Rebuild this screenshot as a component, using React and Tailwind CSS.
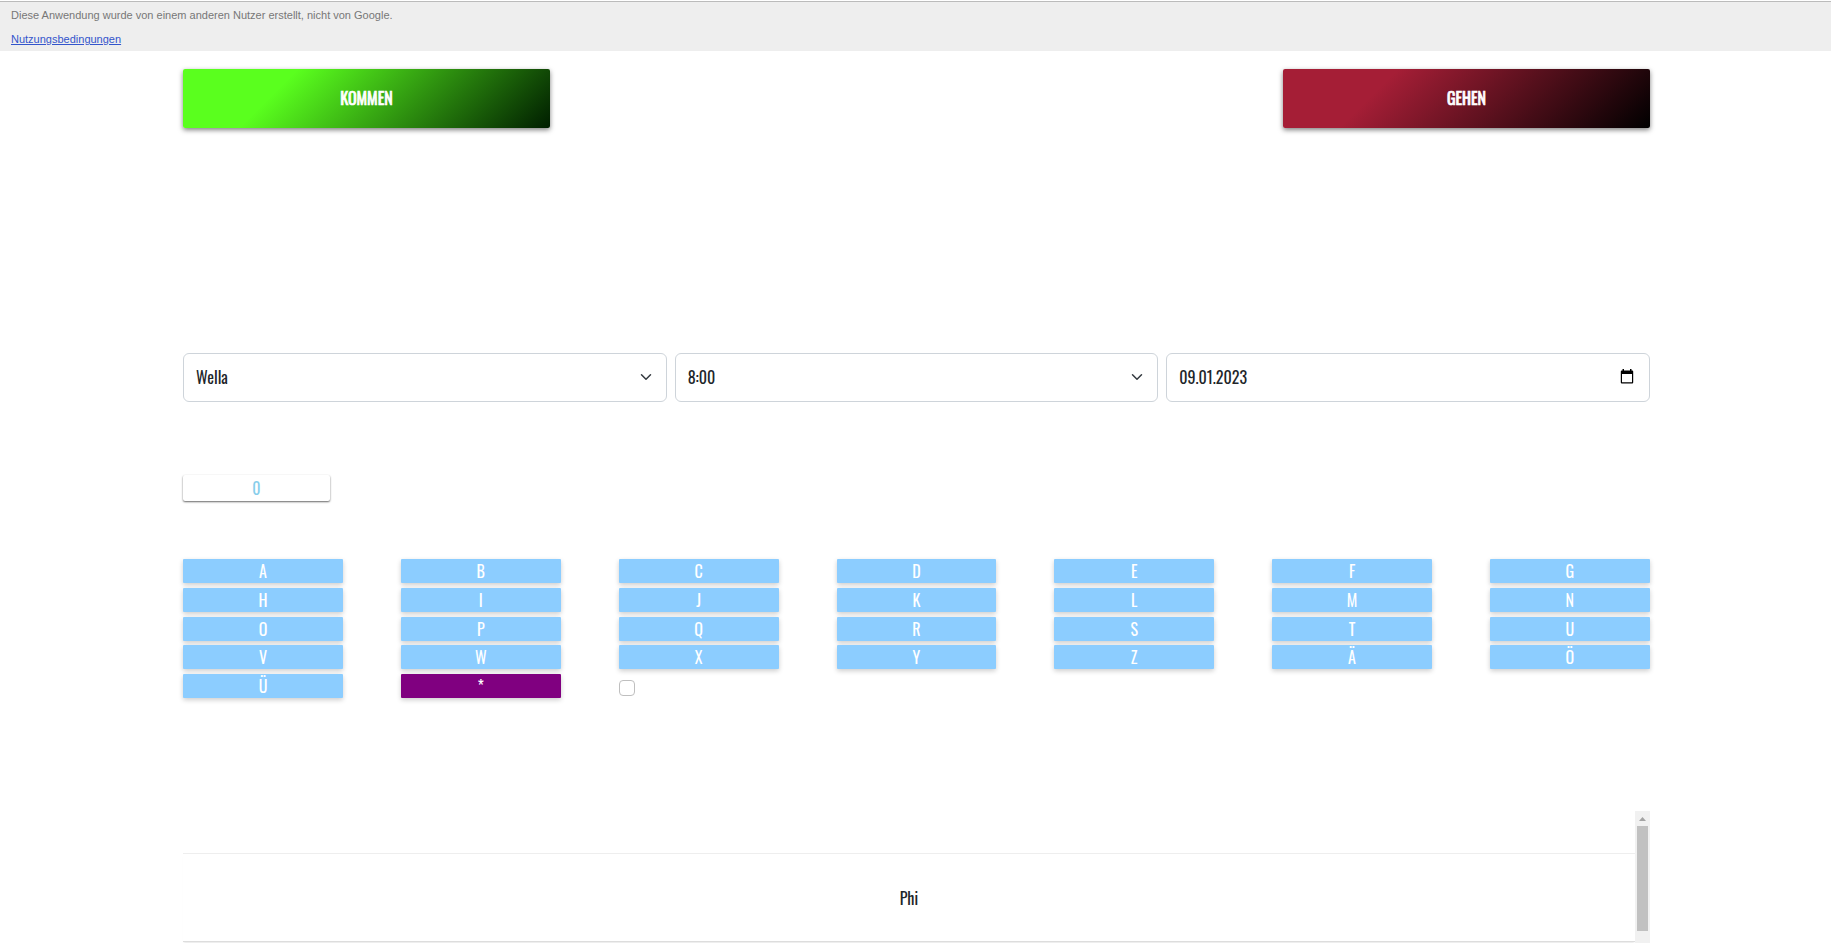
const keys = [..."ABCDEFGHIJKLMNOPQRSTUVWXYZÄÖÜ"];

function Chevron() {
  return (
    <svg className="pointer-events-none absolute right-[13px] top-[18px] h-3 w-4" viewBox="0 0 16 16" fill="none" stroke="#343a40" strokeWidth="2" strokeLinecap="round" strokeLinejoin="round" aria-hidden="true">
      <path d="m2 5 6 6 6-6" />
    </svg>
  );
}

function Choice({ label, value }) {
  return (
    <div className="relative">
      <select aria-label={label} className="block h-[49px] w-full appearance-none rounded-md border border-[#ced4da] bg-white px-3 pb-0.5 text-[#212529]">
        <option>{value}</option>
      </select>
      <Chevron />
    </div>
  );
}

export default function App() {
  return (
    <div className="flex min-h-screen flex-col bg-white font-['Oswald','Liberation_Sans_Narrow','Roboto',sans-serif] text-base text-[#212529]">
      <header className="mt-px flex h-[50px] flex-col gap-3 border-t border-[#bbbbbb] bg-[#eeeeee] px-[11px] pt-[7px] font-['Liberation_Sans',Arial,sans-serif] text-[11px] leading-3">
        <p className="text-[#777777]">Diese Anwendung wurde von einem anderen Nutzer erstellt, nicht von Google.</p>
        <p><a href="#terms" className="text-[#3355cc] underline">Nutzungsbedingungen</a></p>
      </header>
      <main className="ml-[10%] flex w-[80.1%] grow flex-col">
        <div className="mt-[18px] flex justify-between">
          <button className="h-[59px] w-1/4 rounded-xs bg-[linear-gradient(135deg,#5aff1e_27%,#001e00_100%)] pb-0.5 text-white shadow-[0_2px_5px_rgba(0,0,0,0.5)] [-webkit-text-stroke:0.7px_white]">KOMMEN</button>
          <button className="h-[59px] w-1/4 rounded-xs bg-[linear-gradient(135deg,#a51e36_27%,#000000_100%)] pb-0.5 text-white shadow-[0_2px_5px_rgba(0,0,0,0.5)] [-webkit-text-stroke:0.7px_white]">GEHEN</button>
        </div>
        <div className="mt-[225px] grid grid-cols-3 gap-2">
          <Choice label="Kunde" value="Wella" />
          <Choice label="Uhrzeit" value="8:00" />
          <div className="relative">
            <input aria-label="Datum" defaultValue="09.01.2023" className="block h-[49px] w-full rounded-md border border-[#ced4da] bg-white px-3 pb-0.5 text-[#212529]" />
            <svg className="pointer-events-none absolute right-4 top-4 h-[15px] w-[14px]" viewBox="0 0 14 15" aria-hidden="true">
              <path fillRule="evenodd" d="M2.5 0H4v1.5h6V0h1.5v1.5h.7a1 1 0 0 1 1 1v11a1 1 0 0 1-1 1H1.8a1 1 0 0 1-1-1v-11a1 1 0 0 1 1-1h.7zM2 5v8.2h10V5z" />
            </svg>
          </div>
        </div>
        <button className="mt-[73px] h-[26px] w-1/10 rounded-xs bg-white text-[#87ceeb] shadow-[0_1px_2px_rgba(0,0,0,0.6)]">0</button>
        <div className="mt-[58px] grid h-[139px] grid-cols-7 content-between gap-x-[58px]">
          {keys.map((k) => (
            <button key={k} className="h-6 rounded-[1px] bg-[#8ccdff] leading-6 text-white shadow-[0_2px_5px_rgba(0,0,0,0.2)]">{k}</button>
          ))}
          <button className="h-6 rounded-[1px] bg-[#800080] leading-6 text-white shadow-[0_2px_5px_rgba(0,0,0,0.2)]">*</button>
          <input type="checkbox" aria-label="Auswahl" className="mt-[6px] h-4 w-4 appearance-none rounded border border-[#bfbfbf] bg-white" />
        </div>
        <section className="mt-[113px] flex grow">
          <div className="flex grow flex-col">
            <div className="h-[43px] border-b border-[#eeeeee]" />
            <div className="flex h-[88px] items-center justify-center border-b border-[#dddddd] shadow-[0_2px_2px_-1px_rgba(0,0,0,0.1)]">Phi</div>
          </div>
          <div className="flex w-[15px] flex-col items-center bg-[#f1f1f1]" aria-hidden="true">
            <svg className="h-[15px] w-[15px]" viewBox="0 0 15 15" fill="#a3a3a3"><path d="m7.5 6 3.5 4H4z" /></svg>
            <div className="h-[105px] w-[11px] bg-[#c1c1c1]" />
          </div>
        </section>
      </main>
    </div>
  );
}
